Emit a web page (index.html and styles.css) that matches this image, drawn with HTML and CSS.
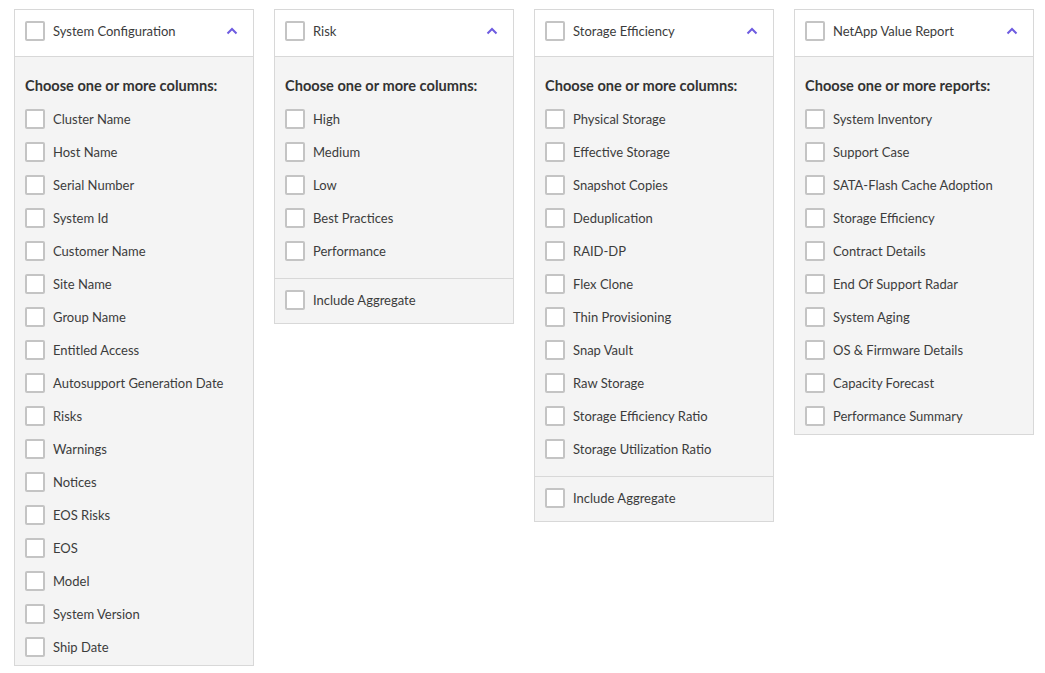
FILE: index.html
```html
<!DOCTYPE html>
<html>
<head>
<meta charset="utf-8">
<link rel="stylesheet" href="styles.css">
</head>
<body>
<div class="panels">
  <section class="panel">
    <header class="panel-head">
      <span class="box"></span><span class="title">System Configuration</span>
      <svg class="chev" width="12" height="8" viewBox="0 0 12 8"><path d="M1.5 6.5 L6 2 L10.5 6.5" fill="none" stroke="#6e5ce0" stroke-width="2"/></svg>
    </header>
    <div class="panel-body">
      <div class="list">
        <h4 class="heading">Choose one or more columns:</h4>
        <label class="row"><span class="box"></span>Cluster Name</label>
        <label class="row"><span class="box"></span>Host Name</label>
        <label class="row"><span class="box"></span>Serial Number</label>
        <label class="row"><span class="box"></span>System Id</label>
        <label class="row"><span class="box"></span>Customer Name</label>
        <label class="row"><span class="box"></span>Site Name</label>
        <label class="row"><span class="box"></span>Group Name</label>
        <label class="row"><span class="box"></span>Entitled Access</label>
        <label class="row"><span class="box"></span>Autosupport Generation Date</label>
        <label class="row"><span class="box"></span>Risks</label>
        <label class="row"><span class="box"></span>Warnings</label>
        <label class="row"><span class="box"></span>Notices</label>
        <label class="row"><span class="box"></span>EOS Risks</label>
        <label class="row"><span class="box"></span>EOS</label>
        <label class="row"><span class="box"></span>Model</label>
        <label class="row"><span class="box"></span>System Version</label>
        <label class="row"><span class="box"></span>Ship Date</label>
      </div>
    </div>
  </section>

  <section class="panel">
    <header class="panel-head">
      <span class="box"></span><span class="title">Risk</span>
      <svg class="chev" width="12" height="8" viewBox="0 0 12 8"><path d="M1.5 6.5 L6 2 L10.5 6.5" fill="none" stroke="#6e5ce0" stroke-width="2"/></svg>
    </header>
    <div class="panel-body">
      <div class="list has-foot">
        <h4 class="heading">Choose one or more columns:</h4>
        <label class="row"><span class="box"></span>High</label>
        <label class="row"><span class="box"></span>Medium</label>
        <label class="row"><span class="box"></span>Low</label>
        <label class="row"><span class="box"></span>Best Practices</label>
        <label class="row"><span class="box"></span>Performance</label>
      </div>
      <div class="foot">
        <label class="row"><span class="box"></span>Include Aggregate</label>
      </div>
    </div>
  </section>

  <section class="panel">
    <header class="panel-head">
      <span class="box"></span><span class="title">Storage Efficiency</span>
      <svg class="chev" width="12" height="8" viewBox="0 0 12 8"><path d="M1.5 6.5 L6 2 L10.5 6.5" fill="none" stroke="#6e5ce0" stroke-width="2"/></svg>
    </header>
    <div class="panel-body">
      <div class="list has-foot">
        <h4 class="heading">Choose one or more columns:</h4>
        <label class="row"><span class="box"></span>Physical Storage</label>
        <label class="row"><span class="box"></span>Effective Storage</label>
        <label class="row"><span class="box"></span>Snapshot Copies</label>
        <label class="row"><span class="box"></span>Deduplication</label>
        <label class="row"><span class="box"></span>RAID-DP</label>
        <label class="row"><span class="box"></span>Flex Clone</label>
        <label class="row"><span class="box"></span>Thin Provisioning</label>
        <label class="row"><span class="box"></span>Snap Vault</label>
        <label class="row"><span class="box"></span>Raw Storage</label>
        <label class="row"><span class="box"></span>Storage Efficiency Ratio</label>
        <label class="row"><span class="box"></span>Storage Utilization Ratio</label>
      </div>
      <div class="foot">
        <label class="row"><span class="box"></span>Include Aggregate</label>
      </div>
    </div>
  </section>

  <section class="panel">
    <header class="panel-head">
      <span class="box"></span><span class="title">NetApp Value Report</span>
      <svg class="chev" width="12" height="8" viewBox="0 0 12 8"><path d="M1.5 6.5 L6 2 L10.5 6.5" fill="none" stroke="#6e5ce0" stroke-width="2"/></svg>
    </header>
    <div class="panel-body">
      <div class="list">
        <h4 class="heading">Choose one or more reports:</h4>
        <label class="row"><span class="box"></span>System Inventory</label>
        <label class="row"><span class="box"></span>Support Case</label>
        <label class="row"><span class="box"></span>SATA-Flash Cache Adoption</label>
        <label class="row"><span class="box"></span>Storage Efficiency</label>
        <label class="row"><span class="box"></span>Contract Details</label>
        <label class="row"><span class="box"></span>End Of Support Radar</label>
        <label class="row"><span class="box"></span>System Aging</label>
        <label class="row"><span class="box"></span>OS &amp; Firmware Details</label>
        <label class="row"><span class="box"></span>Capacity Forecast</label>
        <label class="row"><span class="box"></span>Performance Summary</label>
      </div>
    </div>
  </section>
</div>
</body>
</html>
```

FILE: styles.css
```css
html, body {
  margin: 0;
  padding: 0;
  background: #ffffff;
}
body {
  font-family: "Lato", "Liberation Sans", sans-serif;
  font-size: 13px;
  color: #3a3a3a;
}
.panels {
  display: flex;
  align-items: flex-start;
  gap: 20px;
  padding: 9px 0 0 14px;
}
.panel {
  width: 240px;
  box-sizing: border-box;
  border: 1px solid #d8d8d8;
  background: #f4f4f4;
}
.panel-head {
  display: flex;
  align-items: center;
  height: 47px;
  box-sizing: border-box;
  padding: 0 15px 4px 10px;
  background: #ffffff;
  border-bottom: 1px solid #d8d8d8;
}
.box {
  display: inline-block;
  width: 20px;
  height: 20px;
  box-sizing: border-box;
  border: 2px solid #c4c4c4;
  border-radius: 2px;
  background: #ffffff;
  flex: none;
  margin-right: 8px;
}
.title {
  flex: 1;
  color: #3c3c3c;
}
.chev {
  display: block;
}
.list {
  padding: 19px 10px 2px;
}
.list.has-foot {
  padding-bottom: 11px;
}
.heading {
  margin: 0 0 6px;
  font-size: 14.6px;
  line-height: 20px;
  font-weight: 700;
  color: #333333;
}
.row {
  display: flex;
  align-items: center;
  height: 33px;
  color: #3c3c3c;
}
.foot {
  border-top: 1px solid #d8d8d8;
  padding: 4px 10px 7px;
}
```
